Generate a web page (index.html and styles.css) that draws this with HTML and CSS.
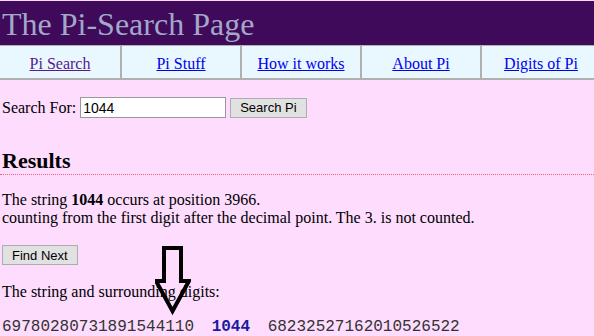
FILE: index.html
```html
<!DOCTYPE html>
<html lang="en">
<head>
  <meta charset="UTF-8">
  <title>The Pi-Search Page</title>
  <link rel="stylesheet" href="styles.css">
</head>
<body>
  <div class="header">
    <h1>The Pi-Search Page</h1>
  </div>
  <table class="nav">
    <tr>
      <td><a href="#" class="visited">Pi Search</a></td>
      <td><a href="#">Pi Stuff</a></td>
      <td><a href="#">How it works</a></td>
      <td><a href="#">About Pi</a></td>
      <td><a href="#">Digits of Pi</a></td>
    </tr>
  </table>

  <div class="content">
    <form class="search">
      <label for="q">Search For:</label>
      <input type="text" id="q" value="1044">
      <button type="button">Search Pi</button>
    </form>

    <h2>Results</h2>

    <p class="found">The string <b>1044</b> occurs at position 3966.<br>
    counting from the first digit after the decimal point. The 3. is not counted.</p>

    <button type="button" class="next">Find Next</button>

    <div class="around">
      <p>The string and surrounding digits:</p>
      <div class="digits">69780280731891544110 <b>1044</b> 68232527162010526522</div>
      <svg class="arrow" width="36" height="76" viewBox="0 0 36 76">
        <path d="M9 4 H26 V37 H34 L17.5 67 L1 37 H9 Z" fill="none" stroke="#000" stroke-width="4"/>
      </svg>
    </div>
  </div>
</body>
</html>
```
FILE: styles.css
```css
body {
  margin: 0;
  padding-top: 1px;
  background: #fedcfe;
  font-family: "Liberation Serif", "Times New Roman", serif;
  font-size: 16px;
  color: #000;
  overflow: hidden;
}
.header {
  background: #400a5a;
  height: 44px;
}
.header h1 {
  margin: 0;
  padding: 5px 0 0 2px;
  font-weight: normal;
  font-size: 32px;
  line-height: 36px;
  color: #a1a8c8;
}
.nav {
  width: 600px;
  table-layout: fixed;
  border-collapse: collapse;
  background: #e9f7ff;
  border-top: 1px solid #b0b0b0;
  border-bottom: 2px solid #b0b0b0;
}
.nav td {
  width: 118px;
  height: 29px;
  padding: 3px 0 0;
  text-align: center;
  border-left: 2px solid #b0b0b0;
}
.nav td:first-child {
  width: 120px;
  border-left: none;
}
.nav a {
  color: #0000ee;
}
.nav a.visited {
  color: #551a8b;
}
.content {
  padding: 0 2px;
}
.search {
  margin: 17px 0 0;
  display: flex;
  align-items: center;
}
.search input {
  margin: 0 0 0 4px;
  width: 146px;
  height: 21px;
  box-sizing: border-box;
  border: 1px solid #999;
  padding: 1px 2px;
  font-family: "Liberation Sans", Arial, sans-serif;
  font-size: 14px;
}
button {
  font-family: "Liberation Sans", Arial, sans-serif;
  font-size: 13px;
  background: #e1e1e1;
  border: 1px solid #adadad;
  padding: 1px 6px;
  height: 20px;
  margin: 0;
}
.search button {
  margin-left: 4px;
  padding: 1px 9px;
}
h2 {
  margin: 30px -2px 0;
  padding: 0 2px;
  font-size: 22px;
  line-height: 26px;
  border-bottom: 1px dotted #f26080;
}
.found {
  margin: 16px 0 18px;
  line-height: 18px;
}
.next {
  padding: 1px 9px;
  height: 20px;
}
.around {
  position: relative;
  padding-top: 18px;
}
.around p {
  margin: 0 0 17px;
}
.digits {
  font-family: "Liberation Mono", "Courier New", monospace;
  font-size: 16px;
  white-space: pre;
  color: #333;
}
.digits b {
  color: #1a1a9c;
  margin: 0 8px;
}
.arrow {
  position: absolute;
  left: 153px;
  top: -21px;
}
```
